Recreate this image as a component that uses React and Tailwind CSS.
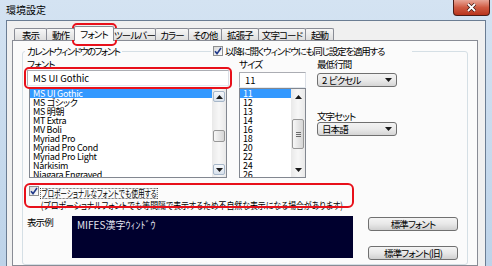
import React from 'react';

const tabs = [
  { label: '表示', w: 'w-[33px]' },
  { label: '動作', w: 'w-[29px]' },
  { label: 'フォント', w: 'w-[40px]', active: true },
  { label: 'ツールバー', w: 'w-[43px]' },
  { label: 'カラー', w: 'w-[34px]' },
  { label: 'その他', w: 'w-[34px]' },
  { label: '拡張子', w: 'w-[38px]' },
  { label: '文字コード', w: 'w-[48px]' },
  { label: '起動', w: 'w-[29px]' },
];

const fontItems = [
  'MS UI Gothic',
  'MS ゴシック',
  'MS 明朝',
  'MT Extra',
  'MV Boli',
  'Myriad Pro',
  'Myriad Pro Cond',
  'Myriad Pro Light',
  'Narkisim',
  'Niagara Engraved',
];

const sizeItems = ['11', '12', '13', '14', '16', '18', '20', '22', '24', '26'];

const Arrow = ({ up }) => (
  <svg width="7" height="4" viewBox="0 0 7 4">
    <polygon points={up ? '0,4 7,4 3.5,0' : '0,0 7,0 3.5,4'} fill="#1a1a1a" />
  </svg>
);

const CheckBox = () => (
  <div className="w-[10px] h-[10px] shrink-0 border border-[#8e8f8f] bg-gradient-to-br from-[#d8d8d8] to-white flex items-center justify-center">
    <svg width="8" height="8" viewBox="0 0 8 8">
      <path d="M1 4.2 L3 6.6 L7 1" fill="none" stroke="#213a8a" strokeWidth="1.6" />
    </svg>
  </div>
);

const ScrollBar = ({ thumbClass, boxed }) => {
  const btn = boxed
    ? 'border border-[#a7b7c9] rounded-[2px] bg-gradient-to-b from-[#f6f8fb] to-[#d9e2ec]'
    : '';
  return (
    <div className="w-[14px] flex flex-col bg-gradient-to-r from-[#e9e9e9] via-[#f7f7f7] to-[#e9e9e9] px-px py-[2px]">
      <div className={`h-[11px] flex items-center justify-center ${btn}`}>
        <Arrow up />
      </div>
      <div className={`${thumbClass} rounded-[2px] border border-[#979797] bg-gradient-to-r from-[#f7f7f7] to-[#d6d6d6] flex flex-col items-center justify-center gap-px`}>
        {!boxed && (
          <>
            <div className="w-[5px] h-px bg-[#6b6b6b]" />
            <div className="w-[5px] h-px bg-[#6b6b6b]" />
            <div className="w-[5px] h-px bg-[#6b6b6b]" />
          </>
        )}
      </div>
      <div className="flex-1" />
      <div className={`h-[11px] flex items-center justify-center ${btn}`}>
        <Arrow />
      </div>
    </div>
  );
};

const ListBox = ({ items, className, thumbClass, boxed }) => (
  <div className={`flex h-[90px] border border-[#828790] bg-white ${className}`}>
    <div className="flex-1 overflow-hidden text-[9px] tracking-[-0.3px]">
      {items.map((it, i) => (
        <div
          key={it}
          className={`h-[9px] leading-[9px] pl-[3px] whitespace-nowrap ${
            i === 0 ? 'bg-[#3399ff] text-white' : 'text-black'
          }`}
        >
          {it}
        </div>
      ))}
    </div>
    <ScrollBar thumbClass={thumbClass} boxed={boxed} />
  </div>
);

const Select = ({ value, className }) => (
  <div className={`h-[14px] rounded-[3px] border border-[#707070] bg-gradient-to-b from-[#f3f3f3] via-[#eaeaea] to-[#d5d5d5] flex items-center justify-between pl-[4px] pr-[4px] leading-[10px] ${className}`}>
    <span className="whitespace-pre">{value}</span>
    <Arrow />
  </div>
);

const Button = ({ children, className }) => (
  <div className={`h-[14px] rounded-[3px] border border-[#707070] bg-gradient-to-b from-[#f4f4f4] via-[#e8e8e8] to-[#d0d0d0] flex items-center justify-center leading-[10px] ${className}`}>
    {children}
  </div>
);

export default function App() {
  return (
    <div className="relative w-[492px] h-[266px] overflow-hidden bg-gradient-to-b from-[#d4e3f2] to-[#bdd3e9] font-['Noto_Sans_CJK_JP',sans-serif] [font-feature-settings:'palt'] text-[9.5px] tracking-[-0.9px] text-black">
      {/* title bar */}
      <div className="h-[20px] flex justify-between items-start">
        <div className="pl-[6px] pt-[5px] leading-[10px] text-[10px] tracking-normal">環境設定</div>
        <div className="mr-[2px] w-[37px] h-[16px] rounded-b-[4px] border border-t-0 border-[#4a1c17] bg-gradient-to-b from-[#e7a597] via-[#cf5a42] to-[#b8341c] flex items-center justify-center">
          <svg width="11" height="9" viewBox="0 0 11 9">
            <path d="M2 1 L9 8 M9 1 L2 8" stroke="#3a1410" strokeWidth="3.2" />
            <path d="M2 1 L9 8 M9 1 L2 8" stroke="#ffffff" strokeWidth="1.8" />
          </svg>
        </div>
      </div>

      {/* client */}
      <div className="flex h-[246px] px-[6px]">
        <div className="flex-1 flex flex-col bg-[#f0f0f0] border border-b-0 border-[#6b7d93]">
          {/* tabs */}
          <div className="mt-[5px] h-[14px] pl-[7px] flex items-end relative z-10">
            {tabs.map((t, i) =>
              t.active ? (
                <div
                  key={t.label}
                  className={`${t.w} -ml-px h-[15px] -mb-px border border-b-0 border-[#898c95] rounded-t-[2px] bg-[#fbfbfb] flex items-center justify-center leading-[10px] relative z-10 whitespace-nowrap`}
                >
                  {t.label}
                </div>
              ) : (
                <div
                  key={t.label}
                  className={`${t.w} ${i > 0 ? '-ml-px' : ''} h-[12px] border border-b-0 border-[#898c95] rounded-t-[2px] bg-gradient-to-b from-[#f7f7f7] to-[#dedede] flex items-center justify-center leading-[10px] whitespace-nowrap`}
                >
                  {t.label}
                </div>
              )
            )}
          </div>

          {/* panel */}
          <div className="flex-1 ml-[5px] mr-[7px] border border-[#898c95] bg-[#fbfbfb]">
            <div className="mt-[10px] mx-[9px] border border-[#d5dfe5] rounded-[3px] pb-[4px]">
              {/* group header */}
              <div className="flex -mt-[6px] h-[10px] leading-[10px]">
                <div className="w-[188px] pl-[2px]">
                  <span className="bg-[#fbfbfb] px-[2px] tracking-[-1.5px]">カレントウィンドウのフォント</span>
                </div>
                <div className="w-[201px] bg-[#fbfbfb] flex items-center gap-[2px] pl-[2px]">
                  <CheckBox />
                  <span className="whitespace-nowrap tracking-[-1.2px]">以降に開くウィンドウにも同じ設定を適用する</span>
                </div>
              </div>

              {/* main row */}
              <div className="flex mt-[3px]">
                <div className="ml-[4px] w-[202px] flex flex-col">
                  <div className="h-[10px] leading-[10px]">フォント</div>
                  <div className="mt-px h-[16px] border border-[#abadb3] border-r-[#dbdfe6] border-b-[#e3e9ef] bg-white pl-[5px] leading-[14px] tracking-normal">
                    MS UI Gothic
                  </div>
                  <ListBox items={fontItems} className="mt-[2px] mx-[2px]" thumbClass="mt-[28px] h-[12px]" boxed />
                </div>

                <div className="ml-[10px] w-[67px] flex flex-col">
                  <div className="h-[10px] leading-[10px]">サイズ</div>
                  <div className="mt-[3px] h-[16px] border border-[#abadb3] border-r-[#dbdfe6] border-b-[#e3e9ef] bg-white pl-[5px] leading-[14px] tracking-normal">
                    11
                  </div>
                  <ListBox items={sizeItems} className="" thumbClass="mt-[17px] h-[30px]" />
                </div>

                <div className="ml-[11px] w-[80px] flex flex-col">
                  <div className="h-[10px] leading-[10px]">最低行間</div>
                  <Select value="2  ピクセル" className="mt-[4px]" />
                  <div className="mt-[24px] h-[10px] leading-[10px]">文字セット</div>
                  <Select value="日本語" className="mt-px" />
                </div>
              </div>

              {/* proportional */}
              <div className="flex items-start gap-[1px] ml-[6px] mt-[8px]">
                <CheckBox />
                <div className="flex flex-col">
                  <div>
                    <span className="inline-block origin-left scale-x-[0.7] tracking-normal border border-dotted border-[#333] px-px h-[11px] leading-[9px] whitespace-nowrap">
                      プロポーショナルなフォントでも使用する
                    </span>
                  </div>
                  <div className="h-[10px] leading-[10px] pl-px whitespace-nowrap origin-left scale-x-[0.83] tracking-normal">
                    (プロポーショナルフォントでも等間隔で表示するため不自然な表示になる場合があります)
                  </div>
                </div>
              </div>

              {/* preview row */}
              <div className="flex mt-[6px]">
                <div className="ml-[4px] w-[45px] leading-[10px] pt-px">表示例</div>
                <div className="w-[281px] h-[42px] bg-[#00002e] text-[#e2e2ee] pl-[5px] pt-[4px] leading-[10px] text-[10px] tracking-normal">
                  MIFES漢字ｳｨﾝﾄﾞｳ
                </div>
                <div className="ml-[15px] w-[90px] flex flex-col">
                  <Button className="mt-px">標準フォント</Button>
                  <Button className="mt-[15px]">標準フォント(旧)</Button>
                </div>
              </div>
            </div>
          </div>
        </div>
      </div>

      {/* red highlight frames */}
      <div className="absolute left-[72px] top-[23px] w-[45px] h-[23px] border-2 border-[#e8101a] rounded-[5px]" />
      <div className="absolute left-[24px] top-[67px] w-[208px] h-[22px] border-2 border-[#e8101a] rounded-[5px]" />
      <div className="absolute left-[24px] top-[183px] w-[330px] h-[25px] border-2 border-[#e8101a] rounded-[6px]" />
    </div>
  );
}
